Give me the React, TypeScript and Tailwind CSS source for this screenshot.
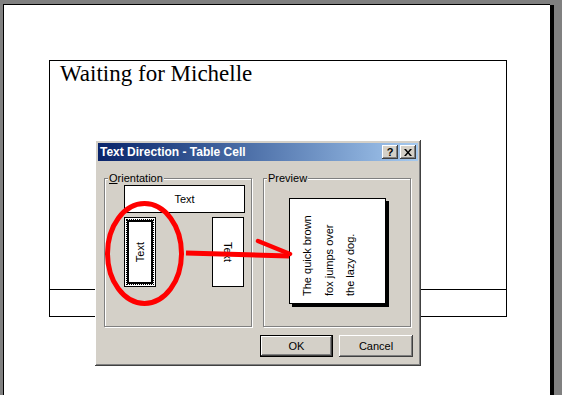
import React from 'react';

const ui = { fontFamily: '"Liberation Sans", Arial, sans-serif' };

const bevel =
  'shadow-[inset_-1px_-1px_0_#404040,inset_1px_1px_0_#fff,inset_-2px_-2px_0_#808080,inset_2px_2px_0_#d4d0c8]';

const GroupBox: React.FC<{ label: React.ReactNode; children: React.ReactNode }> = ({ label, children }) => (
  <div className="relative w-[148px] h-[149px] border border-[#808080] shadow-[inset_1px_1px_0_#fff,1px_1px_0_#fff]">
    <div className="absolute -top-[7px] left-[3px] bg-[#d4d0c8] px-[1px] text-[11px] leading-[13px] text-black">
      {label}
    </div>
    {children}
  </div>
);

const TitleButton: React.FC<{ children: React.ReactNode }> = ({ children }) => (
  <div className={`w-[16px] h-[14px] bg-[#d4d0c8] flex items-center justify-center ${bevel}`}>{children}</div>
);

const App: React.FC = () => {
  return (
    <div className="relative w-[562px] h-[395px] overflow-hidden bg-[#808080] pt-[4px] pl-[3px]" style={ui}>
      {/* document page */}
      <div className="w-[547px] h-[400px] bg-white border-l border-t border-black shadow-[4px_1px_0_#000]">
        <div className="ml-[45px] mt-[55px] w-[458px] h-[257px] border border-black flex flex-col">
          <div
            className="h-[229px] border-b border-black pl-[10px] text-[23px] leading-[26px] text-black"
            style={{ fontFamily: '"Liberation Serif", "Times New Roman", serif' }}
          >
            Waiting for Michelle
          </div>
          <div className="flex-1" />
        </div>
      </div>

      {/* dialog */}
      <div className={`absolute left-[95px] top-[140px] w-[326px] h-[226px] bg-[#d4d0c8] p-[3px] ${bevel}`}>
        <div className="h-[18px] flex items-center justify-between pl-[2px] pr-[2px] bg-gradient-to-r from-[#0a246a] to-[#a6caf0]">
          <span className="text-white font-bold text-[12px]">Text Direction - Table Cell</span>
          <div className="flex gap-[2px]">
            <TitleButton>
              <span className="text-[11px] font-bold leading-none text-black">?</span>
            </TitleButton>
            <TitleButton>
              <svg width="8" height="7" viewBox="0 0 8 7">
                <path d="M0 0h2l2 2.5L6 0h2L5 3.5 8 7H6L4 4.5 2 7H0l3-3.5z" fill="#000" />
              </svg>
            </TitleButton>
          </div>
        </div>

        <div className="flex gap-[11px] pl-[6px] pt-[17px]">
          <GroupBox label={<><span className="underline">O</span>rientation</>}>
            <div className="pl-[19px] pt-[6px]">
              <div className="w-[121px] h-[28px] bg-white border border-black flex items-center justify-center text-[11px]">
                Text
              </div>
              <div className="flex justify-between w-[120px] mt-[4px]">
                <div className="w-[32px] h-[70px] border border-black bg-white p-[1px]">
                  <div className="w-full h-full border border-dotted border-black">
                    <div className="w-full h-full border-2 border-black bg-white flex items-center justify-center">
                      <span className="[writing-mode:vertical-rl] rotate-180 text-[11px]">Text</span>
                    </div>
                  </div>
                </div>
                <div className="w-[32px] h-[70px] border border-black bg-white flex items-center justify-center">
                  <span className="[writing-mode:vertical-rl] text-[11px]">Text</span>
                </div>
              </div>
            </div>
          </GroupBox>

          <GroupBox label="Preview">
            <div className="pl-[25px] pt-[19px]">
              <div className="w-[97px] h-[106px] bg-white border border-black shadow-[3px_3px_0_#000] pl-[7px] pt-[9px]">
                <div className="h-[88px] [writing-mode:vertical-rl] rotate-180 text-[11px] leading-[21.5px] text-black">
                  <div>The quick brown</div>
                  <div>fox jumps over</div>
                  <div>the lazy dog.</div>
                </div>
              </div>
            </div>
          </GroupBox>
        </div>

        <div className="flex justify-end gap-[6px] pr-[5px] pt-[8px]">
          <div className="w-[73px] h-[22px] border border-black">
            <div className={`w-full h-full flex items-center justify-center text-[11px] ${bevel}`}>OK</div>
          </div>
          <div className={`w-[74px] h-[22px] flex items-center justify-center text-[11px] ${bevel}`}>Cancel</div>
        </div>
      </div>

      {/* red annotation */}
      <svg className="absolute left-0 top-0 pointer-events-none" width="562" height="395">
        <ellipse cx="144.5" cy="253.5" rx="37" ry="50" fill="none" stroke="#f00" strokeWidth="5" />
        <path d="M186 253 L289 256" stroke="#f00" strokeWidth="5" fill="none" />
        <path d="M258 241 L290 254" stroke="#f00" strokeWidth="4.5" fill="none" strokeLinecap="round" />
      </svg>
    </div>
  );
};

export default App;
